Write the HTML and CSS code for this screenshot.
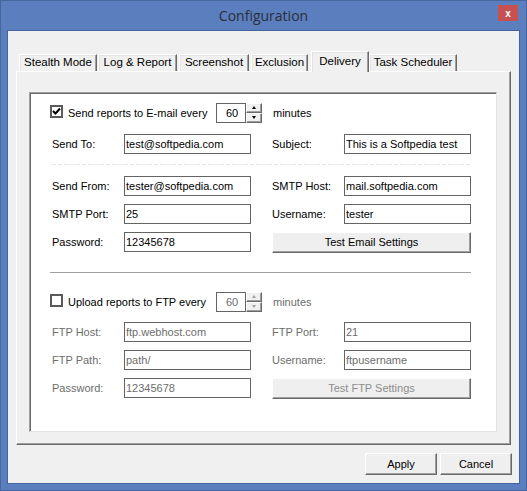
FILE: index.html
```html
<!DOCTYPE html>
<html lang="en">
<head>
    <meta charset="UTF-8">
    <title>Configuration</title>
    <link rel="stylesheet" href="styles.css">
</head>
<body>

<div class="window">
    <div class="titlebar">
        <span class="title">Configuration</span>
        <button class="close">x</button>
    </div>

    <div class="client">
        <div class="tabs">
            <div class="tab t-stealth">Stealth Mode</div>
            <div class="tab t-log">Log &amp; Report</div>
            <div class="tab t-shot">Screenshot</div>
            <div class="tab t-excl">Exclusion</div>
            <div class="tab t-deliv active">Delivery</div>
            <div class="tab t-task">Task Scheduler</div>
        </div>

        <div class="pane">
            <div class="panel">
                <!-- e-mail -->
                <div class="check-row">
                    <span class="check on">
                        <svg width="9" height="9" viewBox="0 0 9 9"><polyline points="1,4 3.5,6.5 8,1.5" fill="none" stroke="#000" stroke-width="2"/></svg>
                    </span>
                    <span class="check-label">Send reports to E-mail every</span>
                    <div class="spinner">
                        <input class="spin-val" type="text" value="60" readonly>
                        <div class="spin-btns">
                            <span class="spin-up"></span>
                            <span class="spin-down"></span>
                        </div>
                    </div>
                    <span class="unit">minutes</span>
                </div>

                <div class="grid first">
                    <label>Send To:</label>
                    <input class="field" type="text" value="test@softpedia.com" readonly>
                    <label>Subject:</label>
                    <input class="field" type="text" value="This is a Softpedia test" readonly>
                </div>

                <div class="dashed"></div>

                <div class="grid">
                    <label>Send From:</label>
                    <input class="field" type="text" value="tester@softpedia.com" readonly>
                    <label>SMTP Host:</label>
                    <input class="field" type="text" value="mail.softpedia.com" readonly>

                    <label>SMTP Port:</label>
                    <input class="field" type="text" value="25" readonly>
                    <label>Username:</label>
                    <input class="field" type="text" value="tester" readonly>

                    <label>Password:</label>
                    <input class="field" type="text" value="12345678" readonly>
                    <button class="btn wide">Test Email Settings</button>
                </div>

                <div class="sep"></div>

                <!-- ftp -->
                <div class="check-row ftp disabled">
                    <span class="check"></span>
                    <span class="check-label">Upload reports to FTP every</span>
                    <div class="spinner">
                        <input class="spin-val" type="text" value="60" disabled>
                        <div class="spin-btns">
                            <span class="spin-up"></span>
                            <span class="spin-down"></span>
                        </div>
                    </div>
                    <span class="unit">minutes</span>
                </div>

                <div class="grid ftp-grid disabled">
                    <label>FTP Host:</label>
                    <input class="field" type="text" value="ftp.webhost.com" disabled>
                    <label>FTP Port:</label>
                    <input class="field" type="text" value="21" disabled>

                    <label>FTP Path:</label>
                    <input class="field" type="text" value="path/" disabled>
                    <label>Username:</label>
                    <input class="field" type="text" value="ftpusername" disabled>

                    <label>Password:</label>
                    <input class="field" type="text" value="12345678" disabled>
                    <button class="btn wide" disabled>Test FTP Settings</button>
                </div>
            </div>
        </div>

        <div class="actions">
            <button class="btn action">Apply</button>
            <button class="btn action">Cancel</button>
        </div>
    </div>
</div>

</body>
</html>
```

FILE: styles.css
```css
body {
    margin: 0;
    font-family: "Liberation Sans", Arial, sans-serif;
    font-size: 11px;
    color: #000;
}
.window {
    width: 527px;
    height: 491px;
    box-sizing: border-box;
    background: #5a7ebe;
    border: 1px solid #47679f;
    display: flex;
    flex-direction: column;
}
.titlebar {
    position: relative;
    height: 30px;
    text-align: center;
}
.title {
    font-family: "Open Sans", "Noto Sans", sans-serif;
    font-size: 14px;
    line-height: 30px;
    color: #2b2f38;
}
.close {
    position: absolute;
    top: 4px;
    right: 8px;
    width: 20px;
    height: 16px;
    padding: 0;
    border: none;
    background: #c75050;
    color: #fff;
    font-family: "Liberation Sans", Arial, sans-serif;
    font-weight: bold;
    font-size: 10px;
    line-height: 15px;
}
.client {
    flex: 1;
    margin: 0 7px 7px 7px;
    background: #f0f0f0;
    box-shadow: 0 0 0 1px #44649f;
}

/* tabs */
.tabs {
    display: flex;
    align-items: flex-end;
    height: 40px;
    box-sizing: border-box;
    padding-left: 11px;
}
.tab {
    height: 17px;
    box-sizing: border-box;
    border-top: 1px solid #fff;
    border-left: 1px solid #fff;
    border-right: 1px solid #696969;
    box-shadow: inset -1px 0 0 #a0a0a0, inset 1px 1px 0 #e3e3e3;
    text-align: center;
    line-height: 15px;
    font-size: 11.5px;
    white-space: nowrap;
}
.t-stealth { width: 78px; margin-right: 1px; }
.t-log { width: 79px; margin-right: 2px; }
.t-shot { width: 70px; margin-right: 2px; }
.t-excl { width: 57px; margin-right: 3px; }
.t-deliv { width: 58px; }
.t-task { width: 88px; }
.tab.active {
    position: relative;
    z-index: 1;
    height: 21px;
    margin-bottom: -1px;
    background: #f0f0f0;
    line-height: 19px;
}

.pane {
    position: relative;
    width: 495px;
    height: 374px;
    margin-left: 8px;
    box-sizing: border-box;
    border-top: 1px solid #fff;
    border-left: 1px solid #fff;
    border-right: 1px solid #696969;
    border-bottom: 1px solid #696969;
    box-shadow: inset -1px -1px 0 #a0a0a0;
    padding: 20px 0 0 12px;
}
.panel {
    width: 468px;
    height: 340px;
    box-sizing: border-box;
    background: #fff;
    border-top: 1px solid #a0a0a0;
    border-left: 1px solid #a0a0a0;
    border-right: 1px solid #e3e3e3;
    border-bottom: 1px solid #e3e3e3;
    box-shadow: inset 1px 1px 0 #696969;
    padding-top: 10px;
}

/* checkbox rows */
.check-row {
    display: flex;
    align-items: center;
    height: 20px;
    padding-left: 20px;
}
.check {
    width: 13px;
    height: 13px;
    box-sizing: border-box;
    border: 2px solid #5a5a5a;
    background: #fff;
    margin-bottom: 3px;
    display: flex;
    align-items: center;
    justify-content: center;
}
.check svg { display: block; }
.check-label {
    width: 148px;
    margin-left: 5px;
}
.spinner {
    display: flex;
    height: 20px;
}
.spin-val {
    width: 30px;
    height: 20px;
    box-sizing: border-box;
    border: 1px solid #646464;
    background: #fff;
    padding: 0 0 0 2px;
    margin: 0;
    font: inherit;
    color: #000;
    text-align: center;
}
.spin-btns {
    display: flex;
    flex-direction: column;
    width: 16px;
}
.spin-up, .spin-down {
    position: relative;
    height: 10px;
    box-sizing: border-box;
    background: #f0f0f0;
    border: 1px solid;
    border-color: #fff #696969 #696969 #fff;
    box-shadow: inset -1px -1px 0 #a0a0a0;
}
.spin-up::after, .spin-down::after {
    content: "";
    position: absolute;
    left: 5px;
    top: 2px;
    border-left: 2.5px solid transparent;
    border-right: 2.5px solid transparent;
}
.spin-up::after { border-bottom: 3px solid #000; }
.spin-down::after { border-top: 3px solid #000; }
.unit {
    margin-left: 11px;
}

/* field grid */
.grid {
    display: grid;
    grid-template-columns: 72px 148px 72px 127px;
    grid-auto-rows: 20px;
    row-gap: 8px;
    align-items: center;
    padding-left: 22px;
}
.grid.first {
    margin-top: 11px;
}
.field {
    width: 127px;
    height: 20px;
    box-sizing: border-box;
    border: 1px solid #646464;
    background: #fff;
    margin: 0;
    padding: 0 0 0 1px;
    font: inherit;
    color: #000;
}
.dashed {
    width: 418px;
    height: 1px;
    margin: 10px 0 11px 22px;
    background: repeating-linear-gradient(90deg, #e6e6e6 0 4px, transparent 4px 6px);
}
.sep {
    width: 421px;
    height: 1px;
    margin: 20px 0 0 20px;
    background: #a0a0a0;
}
.check-row.ftp {
    margin-top: 19px;
}
.ftp-grid {
    margin-top: 10px;
}

.disabled,
.disabled .field,
.disabled .spin-val {
    color: #6d6d6d;
}
.disabled .check-label {
    color: #000;
}
.disabled .spin-up::after { border-bottom-color: #a0a0a0; }
.disabled .spin-down::after { border-top-color: #a0a0a0; }

/* buttons */
.btn {
    height: 21px;
    box-sizing: border-box;
    background: #efefef;
    border: 1px solid;
    border-color: #fff #696969 #696969 #fff;
    box-shadow: inset -1px -1px 0 #a0a0a0;
    padding: 0;
    font: inherit;
    color: #000;
}
.btn:disabled {
    color: #8d8d8d;
}
.btn.wide {
    grid-column: 3 / 5;
    width: 199px;
}
.actions {
    display: flex;
    justify-content: flex-end;
    gap: 3px;
    padding: 8px 7px 0 0;
}
.btn.action {
    width: 72px;
    height: 22px;
}
```
